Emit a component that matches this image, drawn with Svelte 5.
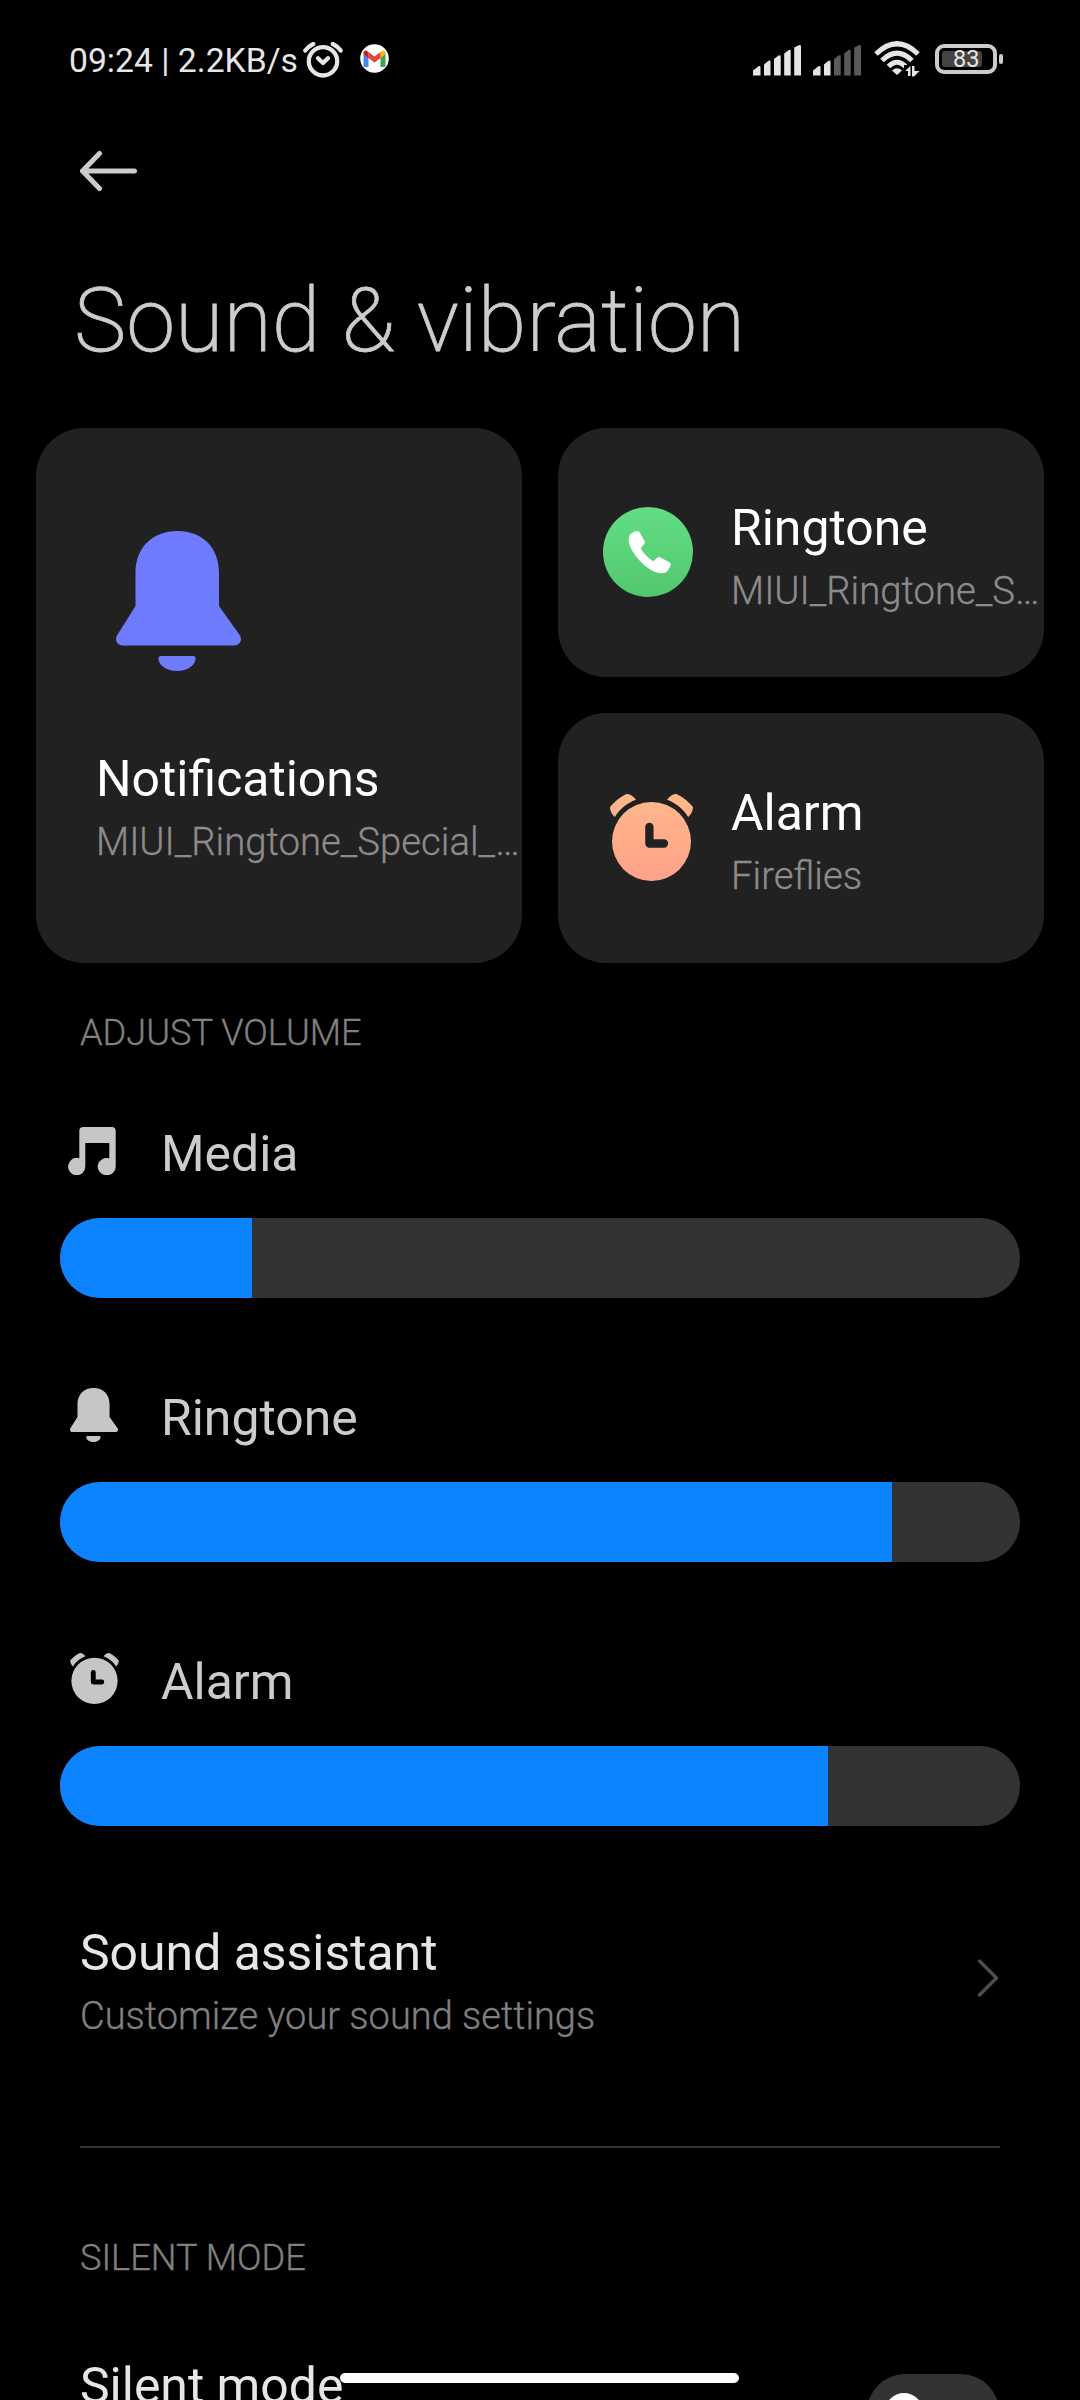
<script lang="ts">
  interface Volume {
    icon: 'music' | 'bell' | 'alarm';
    label: string;
    value: number;
  }

  const volumes: Volume[] = [
    { icon: 'music', label: 'Media', value: 20 },
    { icon: 'bell', label: 'Ringtone', value: 86.67 },
    { icon: 'alarm', label: 'Alarm', value: 80 }
  ];

  const signals = [5, 2];

  // slanted signal bars, left to right
  const bars = [
    'M0 34.5V29.5L5.5 25.3Q7.5 24.5 7.5 26.5V34.5Z',
    'M11 34.5V23.5L15.5 19.8Q17.5 19 17.5 21V34.5Z',
    'M21 34.5V18L25.5 14.5Q27.7 13.7 27.7 15.7V34.5Z',
    'M31.2 34.5V12.5L35.7 9Q37.7 8.2 37.7 10.2V34.5Z',
    'M41.2 34.5V6.5L45.7 4.2Q48 3.4 48 5.4V34.5Z'
  ];
</script>

{#snippet bell()}
  <svg class="bell" viewBox="0 0 125 140">
    <path d="M19.5 75V42C19.5 16 37 0 61.5 0S103 16 103 42V75L124 104.5C126.500 109 124 114.500 118 114.500H7C1 114.500 -1.500 109 1 104.500Z" />
    <path d="M45 125H77Q80 125 79.500 129C78 135.500 70 140 61 140S44 135.500 42.500 129Q42 125 45 125Z" />
  </svg>
{/snippet}

{#snippet alarm()}
  <svg class="alarm" viewBox="0 0 83 87">
    <defs>
      <linearGradient id="peach" x1="0" y1="0" x2="0" y2="87" gradientUnits="userSpaceOnUse">
        <stop offset="0" stop-color="#ffb88a" />
        <stop offset="1" stop-color="#ffa18a" />
      </linearGradient>
    </defs>
    <circle cx="41.5" cy="47.5" r="39.5" />
    <path d="M4.800 23C1.500 20 0 16.500 0 13C4 8 9.500 3.500 15.500 .4C19.500 -.8 23 2 26 5.700C17 9 10 14.500 4.800 23Z" />
    <path d="M78.200 23C81.500 20 83 16.500 83 13C79 8 73.500 3.500 67.500 .4C63.500 -.8 60 2 57 5.700C66 9 73 14.500 78.200 23Z" />
    <path class="hands" d="M39.400 33V49.500H54" />
  </svg>
{/snippet}

{#snippet music()}
  <svg class="music" viewBox="0 0 48 48">
    <path d="M11.300 4Q11.300 0 15.300 0H43.700Q47.700 0 47.700 4V39.500A9 8.700 0 1 1 41.300 31.300V16H17.300V39.500A8.600 8.700 0 1 1 11.300 31.300Z" />
  </svg>
{/snippet}

<div class="screen">
  <header class="status">
    <span class="status__time">09:24 | 2.2KB/s</span>
    <svg class="status__alarm" width="40" height="36" viewBox="0 0 40 36">
      <circle cx="20" cy="19.3" r="14.2" />
      <path d="M15 16.300L20 21L25 16.300" />
      <path d="M2.300 8.500Q5.500 4.300 10.200 2" />
      <path d="M37.700 8.500Q34.500 4.300 29.800 2" />
    </svg>
    <svg class="status__mail" width="29" height="29" viewBox="0 0 29 29">
      <circle cx="14.5" cy="14.5" r="14.3" fill="#fff" />
      <path d="M3.500 9V21.500Q3.500 23 5 23H8.500V12Z" fill="#4285f4" />
      <path d="M20.500 12V23H24Q25.500 23 25.500 21.500V9Z" fill="#34a853" />
      <path d="M20.500 8V14L25.500 10V9C25.500 6.500 23 6 21.500 7.200Z" fill="#fbbc04" />
      <path d="M8.500 14V8L14.500 12.500L20.500 8V14L14.500 18.500Z" fill="#ea4335" />
      <path d="M3.500 9V10L8.500 14V8L7.500 7.200C6 6 3.500 6.500 3.500 9Z" fill="#c5221f" />
    </svg>

    <div class="status__right">
      {#each signals as level}
        <svg width="48" height="35" viewBox="0 0 48 35">
          {#each bars as d, i}
            <path {d} fill={i < level ? '#e6e6e6' : '#5a5a5a'} />
          {/each}
        </svg>
      {/each}
      <svg class="status__wifi" width="48" height="36" viewBox="0 0 48 36">
        <path d="M2 13Q23 -7.500 44 13" />
        <path d="M8 19.500Q23 4.500 38 19.500" />
        <path d="M14.500 25.500Q23 16.800 31.500 25.500" />
        <path class="solid" d="M18 29.500Q23 25 28 29.500L23 34Z" />
        <path class="mask" d="M30 24H48V36H30Z" />
        <path class="solid" d="M31.500 29.500L36.500 25V35H34V30H31.500ZM38 25H40.500V30H45.500L40 35.500H38Z" />
      </svg>
      <div class="battery">
        <div class="battery__cell">
          <div class="battery__level"></div>
          <span class="battery__text">83</span>
        </div>
        <div class="battery__nub"></div>
      </div>
    </div>
  </header>

  <nav class="back">
    <svg width="60" height="42" viewBox="0 0 60 42">
      <path d="M20.500 3.500L3.500 21L20.500 38.500M3.500 21H55.500" />
    </svg>
  </nav>

  <h1>Sound &amp; vibration</h1>

  <section class="cards">
    <div class="card card--tall">
      {@render bell()}
      <div class="card__text">
        <div class="title">Notifications</div>
        <div class="sub">MIUI_Ringtone_Special_…</div>
      </div>
    </div>
    <div class="card">
      <div class="card__icon">
        <svg width="90" height="90" viewBox="0 0 90 90">
          <defs>
            <linearGradient id="green" x1="0" y1="0" x2="0" y2="1">
              <stop offset="0" stop-color="#62dd84" />
              <stop offset="1" stop-color="#52c86e" />
            </linearGradient>
          </defs>
          <circle cx="45" cy="45" r="45" fill="url(#green)" />
          <path
            d="M27.500 27C30 25 32.500 24 34.300 24Q36 24 37 25.800L41.700 34.500Q42.300 36 41.300 37L37.700 41.300C40.500 46.500 45 51 50.300 54.300L54.500 50.600Q55.700 49.600 57 50.200L66.500 55.300Q68.300 56.500 67.600 58.500C66.500 61.500 65 63.500 63 65.300C60 66.800 54.500 66.500 49 63.500C40.500 58.500 32 50 27.800 41C25.500 36 24.500 30 27.500 27Z"
            fill="#fff"
          />
        </svg>
      </div>
      <div class="card__text">
        <div class="title">Ringtone</div>
        <div class="sub">MIUI_Ringtone_S…</div>
      </div>
    </div>
    <div class="card">
      <div class="card__icon">{@render alarm()}</div>
      <div class="card__text">
        <div class="title">Alarm</div>
        <div class="sub">Fireflies</div>
      </div>
    </div>
  </section>

  <h2>ADJUST VOLUME</h2>

  <section class="volumes">
    {#each volumes as volume}
      <div class="volume">
        <div class="volume__head">
          <div class="volume__icon">
            {#if volume.icon === 'music'}
              {@render music()}
            {:else if volume.icon === 'bell'}
              {@render bell()}
            {:else}
              {@render alarm()}
            {/if}
          </div>
          <div class="title">{volume.label}</div>
        </div>
        <div class="volume__track">
          <div class="volume__fill" style="width: {volume.value}%"></div>
        </div>
      </div>
    {/each}
  </section>

  <section class="assistant">
    <div>
      <div class="title">Sound assistant</div>
      <div class="sub">Customize your sound settings</div>
    </div>
    <svg width="24" height="40" viewBox="0 0 24 40">
      <path d="M3.500 3L20.500 20L3.500 37" />
    </svg>
  </section>

  <hr />

  <h2 class="silent-heading">SILENT MODE</h2>

  <section class="silent">
    <div class="title">Silent mode</div>
    <div class="toggle"><div class="toggle__knob"></div></div>
  </section>

  <div class="home"></div>
</div>

<style>
  :global(body) {
    background: #000;
  }

  .screen {
    position: relative;
    width: 1080px;
    height: 2400px;
    overflow: hidden;
    box-sizing: border-box;
    background: #000;
    color: #e6e6e6;
    font-family: Roboto, sans-serif;
  }

  svg {
    display: block;
    flex: none;
  }

  /* Status bar */
  .status {
    display: flex;
    align-items: center;
    height: 120px;
    padding: 0 77px 0 69px;
  }

  .status__time {
    width: 234px;
    font-size: 33.7px;
    white-space: nowrap;
  }

  .status__alarm {
    fill: none;
    stroke: #e6e6e6;
    stroke-width: 4.3;
    stroke-linecap: round;
    stroke-linejoin: round;
  }

  .status__mail {
    margin: -3px 0 0 17px;
  }

  .status__right {
    display: flex;
    align-items: center;
    gap: 12px;
    margin: -3px 0 0 auto;
  }

  .status__wifi {
    margin-left: 1px;
    fill: none;
    stroke: #e6e6e6;
    stroke-width: 5;
  }

  .status__wifi .solid {
    fill: #e6e6e6;
    stroke: none;
  }

  .status__wifi .mask {
    fill: #000;
    stroke: none;
  }

  .battery {
    display: flex;
    align-items: center;
    gap: 2px;
    margin-left: 1px;
  }

  .battery__cell {
    position: relative;
    box-sizing: border-box;
    width: 62px;
    height: 30px;
    padding: 3px;
    border: 4px solid #ccc;
    border-radius: 9px;
  }

  .battery__level {
    width: 40px;
    height: 16px;
    border-radius: 3px;
    background: #444;
  }

  .battery__text {
    position: absolute;
    top: -3px;
    left: 14px;
    font-size: 23.5px;
    line-height: 28px;
  }

  .battery__nub {
    width: 4px;
    height: 10px;
    border-radius: 2px;
    background: #ccc;
  }

  /* Page header */
  .back {
    padding: 30px 79px 0;
  }

  .back path {
    fill: none;
    stroke: #ccc;
    stroke-width: 5;
    stroke-linecap: round;
    stroke-linejoin: round;
  }

  h1 {
    margin: 79px 0 0 74px;
    color: #ccc;
    font-size: 88.2px;
    font-weight: 200;
    line-height: 100px;
    -webkit-text-stroke: 0.8px #ccc;
  }

  /* Sound cards */
  .cards {
    display: grid;
    grid-template-columns: 486px 486px;
    grid-template-rows: 249px 250px;
    gap: 36px;
    margin: 57px 36px 0;
  }

  .card {
    display: flex;
    align-items: flex-start;
    gap: 38px;
    box-sizing: border-box;
    padding: 70px 0 0 45px;
    border-radius: 48px;
    background: #212121;
    white-space: nowrap;
  }

  .card--tall {
    flex-direction: column;
    grid-row: span 2;
    gap: 78px;
    padding: 103px 0 0 60px;
  }

  .card--tall .bell {
    width: 125px;
    height: 140px;
    margin-left: 20px;
    fill: #6e7bff;
  }

  .card__icon {
    display: flex;
    align-items: center;
    justify-content: flex-end;
    width: 90px;
    height: 90px;
    margin-top: 9px;
  }

  .card__icon .alarm {
    width: 83px;
    height: 87px;
    fill: url(#peach);
  }

  .title {
    font-size: 49.9px;
    line-height: 60px;
  }

  .sub {
    margin-top: 8px;
    color: #808080;
    font-size: 38px;
    font-weight: 300;
    line-height: 50px;
    -webkit-text-stroke: 0.3px #808080;
  }

  .card .title {
    color: #fff;
  }

  .card .sub {
    color: #8c8c8c;
    font-size: 38.3px;
    -webkit-text-stroke-color: #8c8c8c;
  }

  .hands {
    fill: none;
    stroke: #212121;
    stroke-width: 8.3;
    stroke-linecap: round;
    stroke-linejoin: round;
  }

  h2 {
    margin: 48px 0 0 80px;
    color: #808080;
    font-size: 36.2px;
    font-weight: 300;
    line-height: 44px;
    -webkit-text-stroke: 0.3px #808080;
  }

  /* Volume sliders */
  .volumes {
    display: flex;
    flex-direction: column;
    gap: 90px;
    margin: 69px 60px 0;
  }

  .volume__head {
    display: flex;
    align-items: center;
    height: 60px;
    margin-bottom: 34px;
    color: #ccc;
  }

  .volume__icon {
    display: flex;
    justify-content: center;
    width: 69px;
    margin: -7px 32px 0 0;
    fill: #c6c6c6;
  }

  .volume__icon .music {
    width: 48px;
    height: 48px;
    margin-left: -5px;
  }

  .volume__icon .bell {
    width: 48px;
    height: 54px;
    margin-left: -1px;
  }

  .volume__icon .alarm {
    width: 49px;
    height: 51px;
  }

  .volume__icon .hands {
    stroke: #000;
  }

  .volume__track {
    height: 80px;
    overflow: hidden;
    border-radius: 40px;
    background: #333;
  }

  .volume__fill {
    height: 100%;
    background: #0d84ff;
  }

  /* Sound assistant */
  .assistant {
    display: flex;
    align-items: center;
    justify-content: space-between;
    margin: 97px 80px 0 80px;
  }

  .assistant svg {
    margin-top: -8px;
  }

  .assistant path {
    fill: none;
    stroke: #4d4d4d;
    stroke-width: 3.5;
    stroke-linecap: round;
    stroke-linejoin: round;
  }

  hr {
    height: 2px;
    margin: 105px 80px 0;
    border: 0;
    background: #333;
  }

  .silent-heading {
    margin-top: 88px;
  }

  /* Silent mode */
  .silent {
    display: flex;
    align-items: flex-start;
    justify-content: space-between;
    margin: 76px 81px 0 80px;
  }

  .toggle {
    box-sizing: border-box;
    width: 132px;
    height: 76px;
    margin-top: 18px;
    padding: 19px 18px;
    border-radius: 38px;
    background: #333;
  }

  .toggle__knob {
    width: 38px;
    height: 38px;
    border-radius: 50%;
    background: #fff;
  }

  /* Gesture bar floats over the list */
  .home {
    position: absolute;
    bottom: 17px;
    left: 340px;
    width: 399px;
    height: 10px;
    border-radius: 5px;
    background: #fff;
  }
</style>
